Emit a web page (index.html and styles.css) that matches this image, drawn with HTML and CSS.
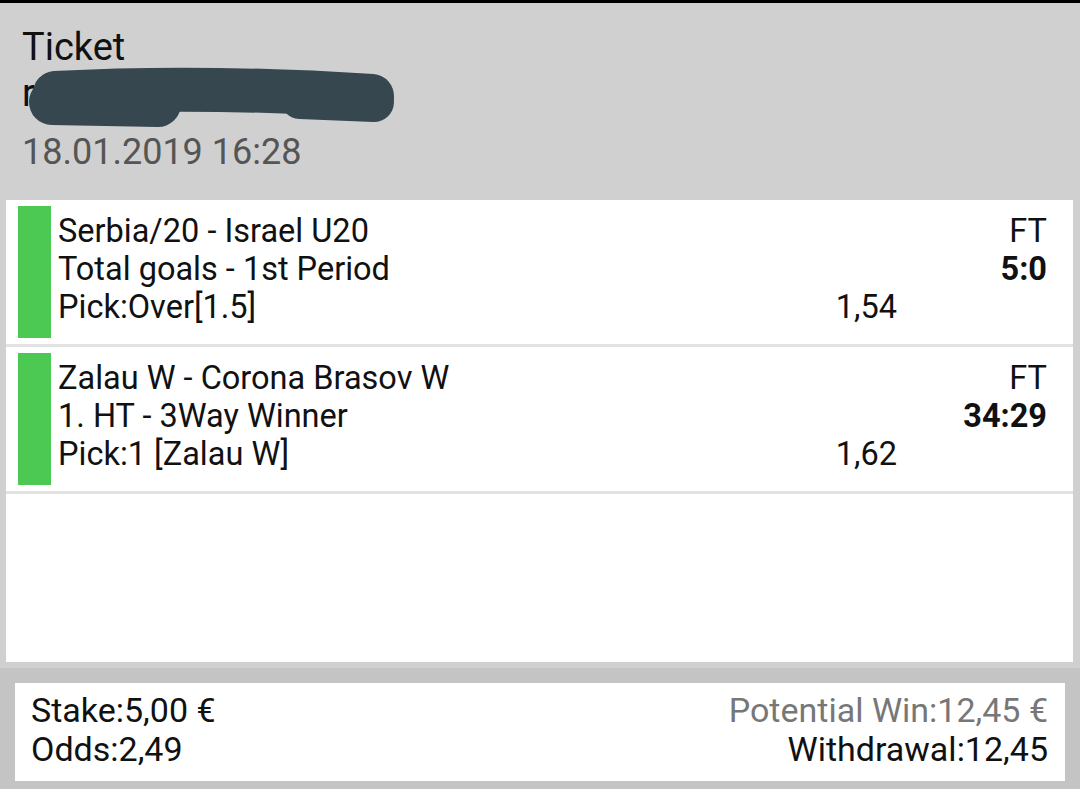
FILE: index.html
```html
<!DOCTYPE html>
<html lang="en">
<head>
  <meta charset="UTF-8">
  <title>Ticket</title>
  <meta name="viewport" content="width=device-width, initial-scale=1">
  <link rel="stylesheet" href="styles.css">
</head>
<body>

<header class="ticket-head">
  <div class="title">
    Ticket<br>
    <span class="owner">r</span>
  </div>
  <div class="date">18.01.2019 16:28</div>
  <!-- redacted name -->
  <svg class="scribble" width="420" height="130" viewBox="0 0 420 130">
    <g fill="none" stroke="#37474f" stroke-linecap="round" stroke-linejoin="round">
      <path d="M52 99 L158 101" stroke-width="46"/>
      <path d="M55 90 Q200 82 372 93" stroke-width="44"/>
      <path d="M300 96 L374 99" stroke-width="40"/>
    </g>
  </svg>
</header>

<div class="bets">
  <div class="bet">
    <div class="status won"></div>
    <div class="bet-info">
      <div class="l1">Serbia/20 - Israel U20</div>
      <div class="l2">Total goals - 1st Period</div>
      <div class="l3">Pick:Over[1.5]</div>
      <div class="odd">1,54</div>
      <div class="state">FT</div>
      <div class="score">5:0</div>
    </div>
  </div>
  <div class="bet">
    <div class="status won"></div>
    <div class="bet-info">
      <div class="l1">Zalau W - Corona Brasov W</div>
      <div class="l2">1. HT - 3Way Winner</div>
      <div class="l3">Pick:1 [Zalau W]</div>
      <div class="odd">1,62</div>
      <div class="state">FT</div>
      <div class="score">34:29</div>
    </div>
  </div>
</div>

<div class="summary">
  <div class="summary-box">
    <div>
      <div>Stake:5,00 €</div>
      <div>Odds:2,49</div>
    </div>
    <div class="right">
      <div class="muted">Potential Win:12,45 €</div>
      <div>Withdrawal:12,45</div>
    </div>
  </div>
</div>

</body>
</html>
```

FILE: styles.css
```css
body {
  margin: 0;
  font-family: Roboto, "Liberation Sans", sans-serif;
  background: #d0d0d0;
  color: #111;
}
.ticket-head {
  position: relative;
  border-top: 3px solid #000;
  padding: 21px 22px 25px;
}
.title {
  font-size: 38px;
  line-height: 46px;
  color: #111;
}
.date {
  margin-top: 13px;
  font-size: 36px;
  line-height: 46px;
  color: #555;
}
.scribble {
  position: absolute;
  left: 0; top: 0;
}
.bets {
  margin: 0 7px 0 6px;
  height: 462px;
  background: white;
}
.bet {
  display: flex;
  padding: 6px 26px 6px 12px;
  border-bottom: 3px solid #e2e2e2;
}
.status {
  width: 33px; height: 132px;
  flex-shrink: 0;
}
.status.won { background: #4cc952; }
.bet-info {
  flex: 1;
  margin-left: 7px;
  padding-top: 6px;
  display: grid;
  grid-template-columns: 1fr auto 150px;
  grid-template-rows: 38px 38px 38px;
  font-size: 32.5px;
  line-height: 38px;
}
.l1 { grid-column: 1; grid-row: 1; }
.l2 { grid-column: 1; grid-row: 2; }
.l3 { grid-column: 1; grid-row: 3; }
.odd { grid-column: 2; grid-row: 3; }
.state { grid-column: 3; grid-row: 1; text-align: right; }
.score { grid-column: 3; grid-row: 2; text-align: right; font-weight: bold; }
.summary {
  margin-top: 6px;
  background: #c4c4c4;
  padding: 15px 15px 8px;
}
.summary-box {
  background: white;
  display: flex;
  justify-content: space-between;
  padding: 8px 17px 12px 16px;
  font-size: 34px;
  line-height: 39px;
}
.right { text-align: right; }
.muted { color: #777; }
```
